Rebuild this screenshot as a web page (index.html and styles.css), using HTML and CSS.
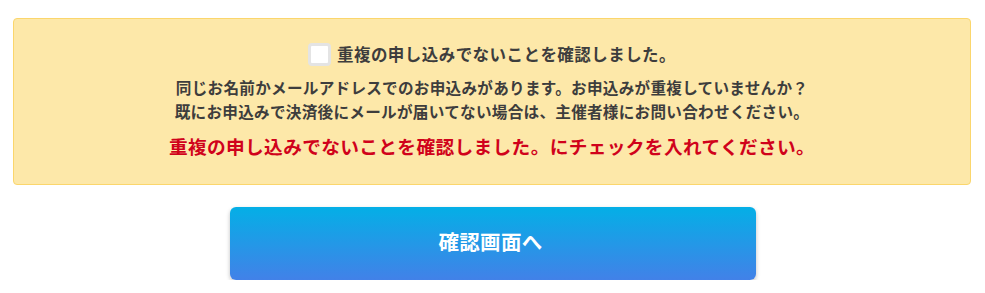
FILE: index.html
```html
<!DOCTYPE html>
<html lang="ja">
<head>
<meta charset="utf-8">
<title>確認</title>
<link rel="stylesheet" href="styles.css">
</head>
<body>
<div class="notice">
  <label class="check-row">
    <input type="checkbox" class="check">
    <span class="check-label">重複の申し込みでないことを確認しました。</span>
  </label>
  <p class="desc">同じお名前かメールアドレスでのお申込みがあります。お申込みが重複していませんか？<br>既にお申込みで決済後にメールが届いてない場合は、主催者様にお問い合わせください。</p>
  <p class="error">重複の申し込みでないことを確認しました。にチェックを入れてください。</p>
</div>
<div class="actions">
  <button class="btn" type="button">確認画面へ</button>
</div>
</body>
</html>
```

FILE: styles.css
```css
html, body {
  margin: 0;
  padding: 0;
  background: #ffffff;
}
body {
  font-family: "Noto Sans CJK JP", "Noto Sans", sans-serif;
  font-weight: 700;
  color: #3d3d3d;
}
.notice {
  margin: 18px 14px 0 13px;
  background: #fde8a9;
  border: 1px solid #fbd66c;
  border-radius: 4px;
  padding: 24px 0 25px;
  text-align: center;
}
.check-row {
  display: flex;
  justify-content: center;
  align-items: center;
  gap: 6px;
  height: 23px;
}
.check {
  appearance: none;
  -webkit-appearance: none;
  margin: 0;
  width: 23px;
  height: 23px;
  box-sizing: border-box;
  border: 3px solid #e4e4e4;
  border-radius: 4px;
  background: #ffffff;
}
.check-label {
  font-size: 16.5px;
  line-height: 23px;
  letter-spacing: 0.45px;
}
.desc {
  margin: 9px 0 0;
  font-size: 15.6px;
  line-height: 24px;
  letter-spacing: 0.28px;
}
.error {
  margin: 10px 0 0;
  font-size: 18.7px;
  line-height: 26px;
  letter-spacing: 0.35px;
  color: #d0021b;
}
.actions {
  display: flex;
  justify-content: center;
  padding-top: 22px;
}
.btn {
  width: 526px;
  height: 73px;
  border: none;
  border-radius: 6px;
  background: linear-gradient(to bottom, #04afe6, #4281e8);
  box-shadow: 0 2px 4px rgba(0, 0, 0, 0.25);
  color: #ffffff;
  font-family: "Noto Sans CJK JP", "Noto Sans", sans-serif;
  font-weight: 700;
  font-size: 20.5px;
  letter-spacing: 0.3px;
  padding: 0 4px 6px 0;
}
```
